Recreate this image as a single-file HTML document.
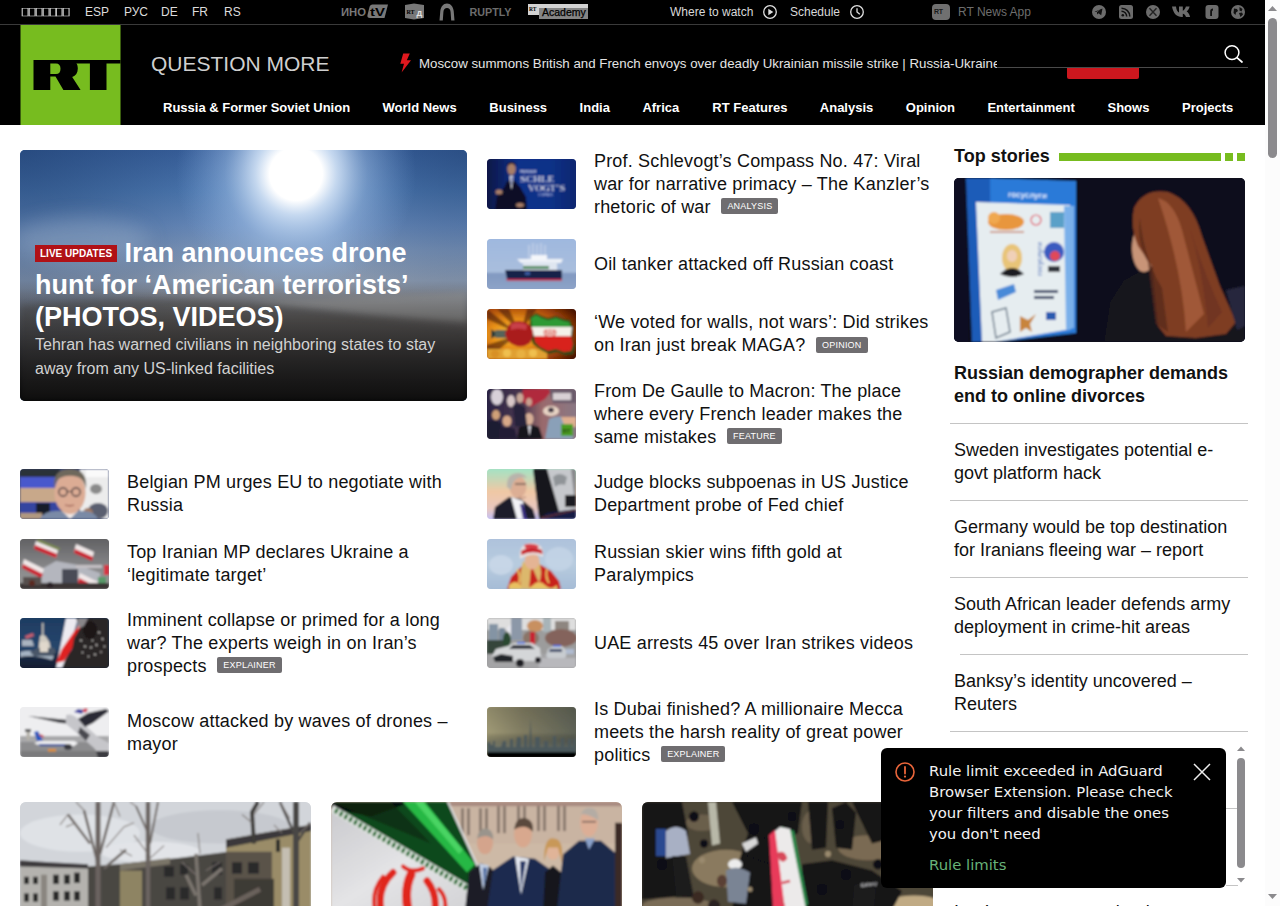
<!DOCTYPE html>
<html lang="en">
<head>
<meta charset="utf-8">
<title>RT - Breaking news, shows, podcasts</title>
<style>
*{box-sizing:border-box;margin:0;padding:0}
html,body{width:1280px;height:906px;overflow:hidden;background:#fff}
body{position:relative;font-family:"Liberation Sans",sans-serif;color:#111}
a{color:inherit;text-decoration:none}
.abs{position:absolute}
/* ---------- header ---------- */
#hdr{position:absolute;left:0;top:0;width:1265px;height:125px;background:#000}
#topline{position:absolute;left:0;top:24px;width:1265px;height:1px;background:#3a3a3a}
#langs{position:absolute;left:20px;top:0;height:24px;display:flex;align-items:center;font-size:12px;color:#d8d8d8;white-space:nowrap}
#langs span{display:block;line-height:24px}
#logo{position:absolute;left:20px;top:25px;width:101px;height:100px}
#qm{position:absolute;left:151px;top:51px;font-size:21px;line-height:26px;color:#cfcfcf;white-space:nowrap;letter-spacing:0}
#ticker{position:absolute;left:419px;top:55px;width:578px;height:18px;overflow:hidden;white-space:nowrap;font-size:13.3px;line-height:18px;color:#e4e4e4}
#nav{position:absolute;left:163px;top:99px;height:18px;font-size:13px;font-weight:bold;color:#fff;line-height:18px;white-space:nowrap}
#sline{position:absolute;left:997px;top:67px;width:251px;height:1px;background:#4a4a4a}
#sred{position:absolute;left:1067px;top:68px;width:72px;height:11px;background:#cc171e;border-radius:0 0 2px 2px}
.tsm{position:absolute;top:0;height:24px;line-height:24px;font-size:12px;white-space:nowrap}
/* ---------- content ---------- */
.row{position:absolute;display:flex;align-items:center}
.th{width:89px;height:50px;border-radius:4px;flex:none;overflow:hidden;position:relative}
.tx{font-size:18px;line-height:23px;color:#111;margin-left:18px;letter-spacing:.18px}
.tag{display:inline-block;vertical-align:middle;font-size:9px;line-height:16px;height:16px;padding:0 6px;background:#6f6d70;color:#fff;border-radius:2px;margin-left:5.500px;position:relative;top:-1.500px;letter-spacing:.2px}
#hero{position:absolute;left:20px;top:150px;width:447px;height:251px;border-radius:5px;overflow:hidden;background:#4d7fb8}
.card{position:absolute;top:802px;width:291px;height:108px;border-radius:6px 6px 0 0;overflow:hidden}
/* sidebar */
.sb{position:absolute;left:954px;width:300px;font-size:18px;line-height:23px;color:#111;white-space:nowrap;margin-top:1px}
.sep{position:absolute;left:950px;width:298px;height:1px;background:#c4c4c4}
#nav span{position:absolute;top:0}
#live{display:inline-block;vertical-align:middle;background:#b01116;color:#fff;font-size:10px;line-height:17px;height:17px;padding:0 5px;font-weight:bold;position:relative;top:-1px;letter-spacing:0;margin-right:0}
#toast{position:absolute;left:881px;top:748px;width:345px;height:140px;background:#000;border-radius:6px;font-family:"DejaVu Sans",sans-serif;overflow:hidden}
#ttxt{font-size:14.850px;line-height:21px;color:#f2f2f2;white-space:nowrap}
#tlink{font-size:14.850px;line-height:21px;color:#67b279;white-space:nowrap}
.tx{white-space:nowrap}
.card svg{height:108px!important}
</style>
</head>
<body>
<div id="hdr"></div>
<div id="topline"></div>
<!-- language bar -->
<span class="tsm" style="left:20px;top:-1.500px;color:#d0d0d0;font-size:11px;letter-spacing:-1.950px;transform:scaleX(1.7);transform-origin:0 0">&#9647;&#9647;&#9647;&#9647;&#9647;&#9647;&#9647;</span>
<span class="tsm" style="left:85px;color:#dcdcdc">ESP</span>
<span class="tsm" style="left:124px;color:#dcdcdc">РУС</span>
<span class="tsm" style="left:161px;color:#dcdcdc">DE</span>
<span class="tsm" style="left:192px;color:#dcdcdc">FR</span>
<span class="tsm" style="left:224px;color:#dcdcdc">RS</span>
<!-- partner logos -->
<svg class="abs" style="left:340px;top:2px" width="50" height="20" viewBox="0 0 50 20">
 <text x="1" y="13.800" font-family="Liberation Sans,sans-serif" font-size="10.500" font-weight="bold" fill="#787878" textLength="25" lengthAdjust="spacingAndGlyphs">ИНО</text>
 <path d="M30.500 2.500h17.500l-3.500 13.500h-14.500c-2 0-3-1.200-2.500-3l2-8c.4-1.600 1.500-2.500 3-2.500z" fill="#787878"/>
 <text x="30" y="13.500" font-family="Liberation Sans,sans-serif" font-size="11" font-weight="bold" fill="#000" textLength="15" lengthAdjust="spacingAndGlyphs">tV</text>
</svg>
<svg class="abs" style="left:404px;top:2px" width="22" height="20" viewBox="0 0 22 20">
 <path d="M1 3l9-1.500 10 1.500v13l-10 1.500-9-1.500z" fill="#787878"/>
 <text x="2.500" y="11.500" font-family="Liberation Serif,serif" font-size="6" font-weight="bold" fill="#000">RT</text>
 <text x="12.500" y="14" font-family="Liberation Sans,sans-serif" font-size="8" font-weight="bold" fill="#e4e4e4">Д</text>
</svg>
<svg class="abs" style="left:438px;top:2px" width="18" height="20" viewBox="0 0 18 20">
 <path d="M1.500 18.500l.8-9.500c.4-4 3-7.500 6.700-7.500s6.300 3.500 6.700 7.500l.8 9.500h-3.300l-.6-8.500c-.2-2.600-1.600-4-3.600-4s-3.400 1.400-3.600 4l-.6 8.500z" fill="#787878"/>
</svg>
<svg class="abs" style="left:468px;top:2px" width="46" height="20" viewBox="0 0 46 20"><text x="1.500" y="14.300" font-family="Liberation Sans,sans-serif" font-size="11" font-weight="bold" fill="#6c6c6c" textLength="42" lengthAdjust="spacingAndGlyphs">RUPTLY</text></svg>
<div class="abs" style="left:539px;top:7px;width:49px;height:11.500px;background:#858585"></div>
<div class="abs" style="left:528px;top:4px;width:60px;height:3.500px;background:#d2d2d2"></div>
<div class="abs" style="left:528px;top:4px;width:11px;height:11px;background:#d2d2d2"></div>
<span class="abs" style="left:529px;top:6px;font-size:5.500px;line-height:6px;font-weight:bold;color:#000;font-family:'Liberation Serif',serif">RT</span>
<span class="abs" style="left:542px;top:4.500px;font-size:10.500px;line-height:14px;color:#000;letter-spacing:0;-webkit-text-stroke:.25px #000">Academy</span>
<!-- where to watch -->
<span class="tsm" style="left:670px;color:#d8d8d8">Where to watch</span>
<svg class="abs" style="left:762px;top:4px" width="16" height="16" viewBox="0 0 16 16"><circle cx="8" cy="8" r="6.300" fill="none" stroke="#e0e0e0" stroke-width="1.300"/><path d="M6.300 4.800v6.400l5-3.200z" fill="#e0e0e0"/></svg>
<span class="tsm" style="left:790px;color:#d8d8d8">Schedule</span>
<svg class="abs" style="left:849px;top:4px" width="16" height="16" viewBox="0 0 16 16"><circle cx="8" cy="8" r="6.300" fill="none" stroke="#e0e0e0" stroke-width="1.300"/><path d="M8 4.200V8l2.800 2.300" fill="none" stroke="#e0e0e0" stroke-width="1.300"/></svg>
<!-- app -->
<div class="abs" style="left:932px;top:4px;width:18px;height:16px;border-radius:4px;background:#707070"></div>
<span class="abs" style="left:934px;top:8px;font-size:7px;line-height:8px;font-weight:bold;color:#1a1a1a;letter-spacing:-.2px">RT</span>
<span class="tsm" style="left:958px;color:#6e6e6e;font-size:12px">RT News App</span>
<!-- social -->
<svg class="abs" style="left:1091px;top:4px" width="16" height="16" viewBox="0 0 16 16"><circle cx="8" cy="8" r="7" fill="#6c6c6c"/><path d="M3.500 7.800l8-3.200-1.300 6.600-2.700-2-1.300 1.300-.3-2.200 3.800-3.200-4.600 2.800z" fill="#111"/></svg>
<svg class="abs" style="left:1118px;top:4px" width="16" height="16" viewBox="0 0 16 16"><rect x="1" y="1" width="14" height="14" rx="2.500" fill="#6c6c6c"/><circle cx="4.800" cy="11.200" r="1.300" fill="#111"/><path d="M3.500 7.300a5.200 5.200 0 0 1 5.200 5.200M3.500 4.200a8.300 8.300 0 0 1 8.300 8.300" fill="none" stroke="#111" stroke-width="1.500"/></svg>
<svg class="abs" style="left:1145px;top:4px" width="16" height="16" viewBox="0 0 16 16"><circle cx="8" cy="8" r="7" fill="#6c6c6c"/><path d="M4.500 4.300l7 7.400M11.500 4.300l-7 7.400" stroke="#222" stroke-width="1.400"/></svg>
<svg class="abs" style="left:1171px;top:3px" width="24" height="18" viewBox="0 0 24 18"><path d="M1 3.500h4c.3 3.600 1.900 5.600 3 6V3.500h3.800v4.200c1.200-.2 2.500-2 3.100-4.200h3.700c-.5 2.400-2 4.300-3 5 1.100.5 2.800 2 3.500 5.500h-4.100c-.6-1.700-1.700-3-3.200-3.200V14h-.9C5.800 14 2.300 10.500 1 3.500z" fill="#6c6c6c"/></svg>
<svg class="abs" style="left:1203.500px;top:4px" width="16" height="16" viewBox="0 0 16 16"><rect x="1.500" y="1" width="13" height="14" rx="3" fill="#6c6c6c"/><path d="M6.200 12V7.200c0-1.600 1-2.700 2.800-2.700v2c-.7 0-1 .3-1 .9V12z" fill="#111"/></svg>
<svg class="abs" style="left:1230px;top:4px" width="16" height="16" viewBox="0 0 16 16"><circle cx="8" cy="8" r="7" fill="#6c6c6c"/><path d="M4 4.500l3 .5 1 2-2 1.500-.5 2.500-2-2zM9.500 3l3 2-1 2.500-2-1zM9 9l3-.5 1 2-2.500 2.500z" fill="#111"/></svg>
<!-- logo -->
<div id="logo">
 <svg width="101" height="100" viewBox="-0.500 0 101 100"><rect x="0" y="0" width="100" height="100" fill="#77bc1f"/>
  <path fill-rule="evenodd" d="M13 35H50c4.800 0 7.300 3.600 7.300 8.500 0 4.300-2 7.300-5.600 8.600L60.100 65H42.900L35 51.600H29.800V65H13zM29.800 38.500V49.100H35.500c3 0 4.500-2 4.500-5.300s-1.500-5.300-4.500-5.300z" fill="#000"/>
  <path d="M48 35h52v3.500H86V65H69.400V38.500H54z" fill="#000"/>
 </svg>
</div>
<div id="qm">QUESTION MORE</div>
<svg class="abs" style="left:398px;top:52px" width="15" height="22" viewBox="0 0 15 22"><path d="M5.200 1.500h6.600L8.800 8.200h4.200L3.600 20.500 6 11.800H2.300z" fill="#e0181e"/></svg>
<div id="ticker">Moscow summons British and French envoys over deadly Ukrainian missile strike | Russia-Ukraine war: latest news and updates</div>
<div id="sline"></div>
<div id="sred"></div>
<svg class="abs" style="left:1221px;top:42px" width="24" height="24" viewBox="0 0 24 24"><circle cx="11" cy="10.600" r="6.900" fill="none" stroke="#fff" stroke-width="1.500"/><path d="M16.200 15.800l4.800 4.200" stroke="#fff" stroke-width="1.700" stroke-linecap="round"/></svg>
<div id="nav"><span style="left:0px">Russia &amp; Former Soviet Union</span><span style="left:219.5px">World News</span><span style="left:326.3px">Business</span><span style="left:416.6px">India</span><span style="left:479.4px">Africa</span><span style="left:549.3px">RT Features</span><span style="left:656.8px">Analysis</span><span style="left:742.8px">Opinion</span><span style="left:824.4px">Entertainment</span><span style="left:944.5px">Shows</span><span style="left:1019px">Projects</span></div>
<!-- fake page scrollbar -->
<div class="abs" style="left:1265px;top:0;width:15px;height:906px;background:#fcfcfc"></div>
<div class="abs" style="left:1268px;top:18px;width:9px;height:140px;border-radius:5px;background:#8b8a8d"></div>
<svg class="abs" style="left:1265px;top:0" width="15" height="906" viewBox="0 0 15 906"><path d="M3 11l4.500-5 4.500 5z" fill="#8b8a8d"/><path d="M3 894l4.500 5 4.500-5z" fill="#8b8a8d"/></svg>
<div id="hero">
<svg width="447" height="251" viewBox="0 0 447 251" style="display:block;position:absolute;left:0;top:0" ><defs>
<linearGradient id="hs" x1="0" y1="0" x2="0" y2="1"><stop offset="0" stop-color="#3a629e"/><stop offset=".16" stop-color="#4e7ab2"/><stop offset=".3" stop-color="#6a8cbc"/><stop offset=".4" stop-color="#7e96b8"/><stop offset=".52" stop-color="#8a98ac"/><stop offset=".58" stop-color="#7c8088"/><stop offset=".68" stop-color="#5c5a5a"/><stop offset=".8" stop-color="#3a383a"/><stop offset=".92" stop-color="#1c1c1e"/><stop offset="1" stop-color="#0a0a0a"/></linearGradient>
<radialGradient id="hsun" cx="276" cy="24" r="120" gradientUnits="userSpaceOnUse"><stop offset="0" stop-color="#fff"/><stop offset=".22" stop-color="#fff"/><stop offset=".34" stop-color="#cfe0f4" stop-opacity=".9"/><stop offset=".6" stop-color="#9cbce4" stop-opacity=".5"/><stop offset="1" stop-color="#7ea6da" stop-opacity="0"/></radialGradient>
<linearGradient id="hdk" x1="0" y1="0" x2="0" y2="1"><stop offset="0" stop-color="#000" stop-opacity="0"/><stop offset=".55" stop-color="#000" stop-opacity="0"/><stop offset=".75" stop-color="#000" stop-opacity=".25"/><stop offset="1" stop-color="#000" stop-opacity=".6"/></linearGradient>
<radialGradient id="hl" cx="0" cy="0" r="230" gradientUnits="userSpaceOnUse"><stop offset="0" stop-color="#1c3c6c" stop-opacity=".6"/><stop offset="1" stop-color="#1c3c6c" stop-opacity="0"/></radialGradient><radialGradient id="hr" cx="447" cy="0" r="170" gradientUnits="userSpaceOnUse"><stop offset="0" stop-color="#1c3c6c" stop-opacity=".5"/><stop offset="1" stop-color="#1c3c6c" stop-opacity="0"/></radialGradient>
<filter id="hblur" x="-30%" y="-60%" width="160%" height="220%"><feGaussianBlur stdDeviation="10"/></filter>
<filter id="hblur2" x="-10%" y="-30%" width="120%" height="160%"><feGaussianBlur stdDeviation="3"/></filter>
<linearGradient id="hbeam" x1="0" y1="0" x2="0" y2="1"><stop offset="0" stop-color="#a8c6ee" stop-opacity=".7"/><stop offset="1" stop-color="#a8c6ee" stop-opacity="0"/></linearGradient>
</defs>
<rect width="447" height="251" fill="url(#hs)"/>
<rect width="447" height="251" fill="url(#hl)"/><rect width="447" height="251" fill="url(#hr)"/>
<rect x="236" y="-20" width="84" height="150" fill="url(#hbeam)" filter="url(#hblur)"/>
<ellipse cx="60" cy="90" rx="70" ry="22" fill="#9ab0cc" opacity=".45" filter="url(#hblur)"/>
<rect width="447" height="160" fill="url(#hsun)"/>
<path d="M230 152l217-10v30l-100-8z" fill="#9a9a98" opacity=".5" filter="url(#hblur2)"/>
<path d="M0 156q120-14 260 0l187 24v71H0z" fill="#4a4644" opacity=".45" filter="url(#hblur2)"/>
<rect width="447" height="251" fill="url(#hdk)"/></svg>
 <div class="abs" id="herotxt" style="left:15px;top:87px;width:420px">
  <div style="font-size:27px;line-height:32px;font-weight:bold;color:#fff;white-space:nowrap"><span id="live">LIVE UPDATES</span> Iran announces drone<br>hunt for ‘American terrorists’<br>(PHOTOS, VIDEOS)</div>
  <div style="font-size:16px;line-height:24px;color:#d2d2d2;margin-top:0;white-space:nowrap">Tehran has warned civilians in neighboring states to stay<br>away from any US-linked facilities</div>
 </div>
</div>
<div class="row" style="left:487px;top:144px;height:80px"><div class="th" id="t1"><svg width="89" height="51" viewBox="0 0 89 51" style="display:block;position:absolute;left:0;top:0" ><defs><linearGradient id="g1" x1="0" x2="1"><stop offset="0" stop-color="#0a1746"/><stop offset=".35" stop-color="#10308a"/><stop offset=".7" stop-color="#103288"/><stop offset="1" stop-color="#0c2670"/></linearGradient></defs><filter id="bl1" x="-5%" y="-5%" width="110%" height="110%"><feGaussianBlur stdDeviation="0.8"/></filter><rect width="89" height="51" fill="url(#g1)"/><g filter="url(#bl1)">
<rect width="89" height="51" fill="url(#g1)"/>
<path d="M8 51l2-14 7-8 3-7 8 0 5 6 6 10 1 13z" fill="#0a0d26"/>
<ellipse cx="24.500" cy="10" rx="4.200" ry="6" fill="#a87e68"/><path d="M20.500 7q4-5 8 0v-2q-4-4-8 0z" fill="#1a1210"/>
<path d="M22.500 17l2 14 2-14z" fill="#e8e8f0"/><path d="M24 18l.5 9 1-9z" fill="#1c2c80"/>
<ellipse cx="12" cy="33" rx="3.500" ry="2.500" fill="#a87e68"/><ellipse cx="33" cy="46" rx="4" ry="2" fill="#a87e68"/>
<text x="33" y="22.500" font-family="Liberation Serif,serif" font-size="8.500" fill="#f0f0f6" textLength="34" lengthAdjust="spacingAndGlyphs">SCHLE</text>
<text x="41" y="31.500" font-family="Liberation Serif,serif" font-size="8.500" fill="#f0f0f6" textLength="37" lengthAdjust="spacingAndGlyphs">VOGT’S</text>
<text x="33" y="13.500" font-family="Liberation Sans,sans-serif" font-size="2.600" font-weight="bold" fill="#e0e0f0">PROFESSOR</text>
<text x="51" y="37" font-family="Liberation Sans,sans-serif" font-size="3" fill="#d0d4f0">COMPASS</text></g></svg></div><!--/t1--><div class="tx">Prof. Schlevogt’s Compass No. 47: Viral<br>war for narrative primacy – The Kanzler’s<br>rhetoric of war <span class="tag">ANALYSIS</span></div></div>
<div class="row" style="left:487px;top:224px;height:80px"><div class="th" id="t2"><svg width="89" height="50" viewBox="0 0 89 50" style="display:block;position:absolute;left:0;top:0" ><defs><linearGradient id="g2" x1="0" y1="0" x2="0" y2="1"><stop offset="0" stop-color="#9fb8df"/><stop offset=".65" stop-color="#a9bedd"/><stop offset=".7" stop-color="#8299c0"/><stop offset="1" stop-color="#8da3c8"/></linearGradient></defs><filter id="bl2" x="-5%" y="-5%" width="110%" height="110%"><feGaussianBlur stdDeviation="0.8"/></filter><rect width="89" height="50" fill="url(#g2)"/><g filter="url(#bl2)">
<rect width="89" height="50" fill="url(#g2)"/>
<path d="M42 6v14M46 4v16M50 5v15M54 4v16M58 6v14" stroke="#c8d4ea" stroke-width="1.200"/>
<path d="M30 20h46l-2 4H34z" fill="#eef2f8"/><rect x="36" y="23" width="34" height="8" fill="#dfe6f0"/><rect x="44" y="16" width="16" height="5" fill="#f4f6fa"/>
<path d="M36 27h26v3H36z" fill="#4a8a58"/>
<path d="M18 31h57v9H20z" fill="#18224a"/><path d="M19 40h56v1.800H20z" fill="#c42a44"/>
<rect x="38" y="33" width="5" height="3" fill="#3a5aa0"/></g></svg></div><!--/t2--><div class="tx">Oil tanker attacked off Russian coast</div></div>
<div class="row" style="left:487px;top:294px;height:80px"><div class="th" id="t3"><svg width="89" height="50" viewBox="0 0 89 50" style="display:block;position:absolute;left:0;top:0" ><defs><radialGradient id="g3" cx=".32" cy=".5" r=".8"><stop offset="0" stop-color="#f8d040"/><stop offset=".35" stop-color="#e89018"/><stop offset=".7" stop-color="#a84808"/><stop offset="1" stop-color="#4a1404"/></radialGradient></defs><filter id="bl3" x="-5%" y="-5%" width="110%" height="110%"><feGaussianBlur stdDeviation="0.8"/></filter><rect width="89" height="50" fill="url(#g3)"/><g filter="url(#bl3)">
<rect width="89" height="50" fill="url(#g3)"/>
<path d="M0 0L30 24 0 10zM0 50L30 26 0 36zM10 0l22 22L22 0zM40 0l-6 22L50 0z" fill="#3a1206" opacity=".55"/>
<rect x="0" y="40" width="60" height="10" fill="#e0a030"/><circle cx="20" cy="44" r="4" fill="#f0c050"/><circle cx="34" cy="45" r="4.500" fill="#e8b040"/><circle cx="46" cy="44" r="4" fill="#f0c050"/><circle cx="8" cy="45" r="4" fill="#d89028"/>
<path d="M43 8l6-4 6 3 6 2 8-2 8 3 6 1 3 8-1 10 3 8-2 8-8 1-8-3-8 2-8-4-8-6-4-10z" fill="#2a4a18"/>
<path d="M44 9l5-3 6 3 6 2 8-2 8 3 5 1 2 5H45z" fill="#2f9a34"/>
<path d="M44 18h41l-1 9H47z" fill="#f4f0e8"/>
<path d="M47 27h37l2 8-2 7-7 1-8-3-8 2-8-4-5-5z" fill="#d8241a"/>
<path d="M63 20v6M60.500 20.500q-2 3 1 5.500M65.500 20.500q2 3-1 5.500M58.500 21q-3 3 1 6M67.500 21q3 3-1 6" stroke="#d8241a" stroke-width="1.100" fill="none"/>
<path d="M4 23l6-2h28l8 4-8 4H10l-6-2z" fill="#56645a"/><path d="M4 20l4 3v4l-4 3z" fill="#2e3a34"/>
<path d="M20 20q2-8 12-8 12 1 14 10 1 6-3 12-8 6-16 2-6-2-8-8-2-4 1-8z" fill="#aa1a1c"/>
<path d="M24 15q8-3 16 1l-1 5q-8-3-15 0z" fill="#c84048"/></g></svg></div><!--/t3--><div class="tx">‘We voted for walls, not wars’: Did strikes<br>on Iran just break MAGA? <span class="tag">OPINION</span></div></div>
<div class="row" style="left:487px;top:374px;height:80px"><div class="th" id="t4"><svg width="89" height="50" viewBox="0 0 89 50" style="display:block;position:absolute;left:0;top:0" ><defs><linearGradient id="g4" x1="0" x2="1"><stop offset="0" stop-color="#2a2244"/><stop offset=".4" stop-color="#4a3850"/><stop offset=".62" stop-color="#9a6a6c"/><stop offset="1" stop-color="#8a7884"/></linearGradient></defs><filter id="bl4" x="-5%" y="-5%" width="110%" height="110%"><feGaussianBlur stdDeviation="0.8"/></filter><rect width="89" height="50" fill="url(#g4)"/><g filter="url(#bl4)">
<rect width="89" height="50" fill="url(#g4)"/>
<path d="M36 0h30l-8 10-14 8-10-6z" fill="#b02a3e"/>
<path d="M62 0h27v14H66z" fill="#6a5a6a"/><rect x="66" y="4" width="18" height="7" fill="#d8d0d4"/>
<ellipse cx="64" cy="22" rx="8" ry="5" fill="#e8d4c4"/><ellipse cx="64" cy="21" rx="3" ry="2.500" fill="#3a3040"/>
<path d="M62 30q10-6 24 2v18H58z" fill="#8aa0b8"/><path d="M74 28h15v10H78z" fill="#e0b090"/>
<ellipse cx="10" cy="8" rx="6" ry="8" fill="#d8d0d8"/><ellipse cx="24" cy="12" rx="4" ry="6" fill="#d8c8c8"/><ellipse cx="33" cy="9" rx="3.500" ry="5" fill="#c8a898"/>
<ellipse cx="9" cy="26" rx="4" ry="5" fill="#d0a078"/><ellipse cx="20" cy="32" rx="4.500" ry="5.500" fill="#d8a888"/><ellipse cx="42" cy="30" rx="4.500" ry="6" fill="#d8b098"/><ellipse cx="42" cy="13" rx="3" ry="4" fill="#c8a090"/>
<path d="M0 32q8-2 14 2l2 16H0z" fill="#1e1a30"/><path d="M12 40q8-4 16 0l2 10H12z" fill="#241e34"/><path d="M32 38q10-4 20 0l4 12H30z" fill="#16141e"/><path d="M26 16q6-2 12 2l2 18-12 2z" fill="#28243a"/>
<path d="M41 37l1.500 10 1.500-10z" fill="#e8e8f0"/>
<rect x="74" y="35" width="12" height="12" fill="#4c9c22"/><text x="75.500" y="43.500" font-family="Liberation Sans,sans-serif" font-size="6" font-weight="bold" fill="#1e3a12">RT</text></g></svg></div><!--/t4--><div class="tx">From De Gaulle to Macron: The place<br>where every French leader makes the<br>same mistakes <span class="tag">FEATURE</span></div></div>
<div class="row" style="left:487px;top:454px;height:80px"><div class="th" id="t5"><svg width="89" height="50" viewBox="0 0 89 50" style="display:block;position:absolute;left:0;top:0" ><defs><linearGradient id="g5" x1="0" y1="0" x2="0" y2="1"><stop offset="0" stop-color="#a4e2c4"/><stop offset=".45" stop-color="#f0c8a4"/><stop offset=".8" stop-color="#e8c8c0"/><stop offset="1" stop-color="#c4c0f4"/></linearGradient></defs><filter id="bl5" x="-5%" y="-5%" width="110%" height="110%"><feGaussianBlur stdDeviation="0.8"/></filter><rect width="89" height="50" fill="url(#g5)"/><g filter="url(#bl5)">
<rect width="89" height="50" fill="url(#g5)"/>
<path d="M46 0h43v50H52z" fill="#c6c8cc"/><path d="M46 0h14l12 42-14 8h-6z" fill="#17171b"/>
<path d="M66 8q6-6 14 0l-2 8q-6-2-10 2z" fill="#909498"/><path d="M84 0h5v26h-2z" fill="#88888c"/>
<rect x="78" y="26" width="11" height="12" fill="#1c1c24"/><path d="M52 50l8-6 29-4v10z" fill="#141a44"/><path d="M54 49l34-8" stroke="#7a3a20" stroke-width="1"/>
<path d="M6 50l2-12 14-10 12 2 12 10 3 10z" fill="#1e1f2a"/>
<path d="M24 28l6 22h8l-2-18z" fill="#f2f2f6"/><path d="M33 35l3 15h4l-4-15z" fill="#3a2f84"/>
<ellipse cx="31" cy="18" rx="8.500" ry="11" fill="#dcae94"/><path d="M20 18q-1-14 12-14 6 1 8 5-8-2-12 2-3 3-4 10z" fill="#b8b4ac"/>
<path d="M28 15h11" stroke="#3a3030" stroke-width="1"/><path d="M32 28q4 2 7 0" stroke="#a06a5a" stroke-width=".8" fill="none"/></g></svg></div><!--/t5--><div class="tx">Judge blocks subpoenas in US Justice<br>Department probe of Fed chief</div></div>
<div class="row" style="left:487px;top:524px;height:80px"><div class="th" id="t6"><svg width="89" height="50" viewBox="0 0 89 50" style="display:block;position:absolute;left:0;top:0" ><defs><linearGradient id="g6" x1="0" y1="0" x2="0" y2="1"><stop offset="0" stop-color="#aec2dc"/><stop offset=".5" stop-color="#b8ccdf"/><stop offset="1" stop-color="#a6bcd6"/></linearGradient></defs><filter id="bl6" x="-5%" y="-5%" width="110%" height="110%"><feGaussianBlur stdDeviation="0.8"/></filter><rect width="89" height="50" fill="url(#g6)"/><g filter="url(#bl6)">
<rect width="89" height="50" fill="url(#g6)"/>
<ellipse cx="14" cy="26" rx="12" ry="10" fill="#cad8e8" opacity=".8"/><ellipse cx="72" cy="20" rx="14" ry="12" fill="#c4d4e6" opacity=".8"/>
<path d="M20 50l4-12 10-10 8-4 12 2 10 6 8 10 2 8z" fill="#c8201f"/>
<path d="M22 46q6-6 12 0t12 0 12 0 12 0v4H22z" fill="#e8c060"/><path d="M30 30q4 6 2 14M60 30q-2 8 2 14" stroke="#e8c060" stroke-width="2" fill="none"/>
<path d="M36 22q-4 14-2 28h8l2-20zM52 22q4 12 0 22l-6-14z" fill="#dcb86c"/>
<ellipse cx="45" cy="22" rx="7.500" ry="8.500" fill="#e4b494"/>
<path d="M33 20q-2-16 12-16 12 0 11 14-10-6-23 2z" fill="#e8e0e0"/><path d="M34 12q10-6 21-1l.5 4q-11-4-21 1z" fill="#c8242c"/><path d="M37 6q8-3 15 1l-2 3q-6-2-11 0z" fill="#d84048"/></g></svg></div><!--/t6--><div class="tx">Russian skier wins fifth gold at<br>Paralympics</div></div>
<div class="row" style="left:487px;top:603px;height:80px"><div class="th" id="t7"><svg width="89" height="50" viewBox="0 0 89 50" style="display:block;position:absolute;left:0;top:0" ><filter id="bl7" x="-5%" y="-5%" width="110%" height="110%"><feGaussianBlur stdDeviation="0.8"/></filter><rect width="89" height="50" fill="#9c9c9c"/><g filter="url(#bl7)"><rect width="89" height="50" fill="#9c9c9c"/>
<rect width="89" height="12" fill="#dedede"/>
<rect x="2" y="6" width="9" height="18" fill="#8494a4"/><rect x="12" y="10" width="6" height="14" fill="#78889a"/><rect x="24" y="0" width="11" height="22" fill="#8c98a8"/><rect x="68" y="3" width="14" height="10" fill="#8e8680"/><rect x="56" y="0" width="8" height="14" fill="#a8b4b8"/>
<ellipse cx="48" cy="8" rx="8" ry="6" fill="#c89060"/><ellipse cx="74" cy="20" rx="16" ry="9" fill="#84645c"/><ellipse cx="44" cy="20" rx="8" ry="7" fill="#8a7468"/>
<path d="M20 10l4-4v22h-4z" fill="#e8e8ee"/><rect x="43" y="14" width="5" height="14" fill="#c82030"/>
<path d="M0 22h22v14H0z" fill="#34443a"/><ellipse cx="20" cy="22" rx="4" ry="8" fill="#2a4a30"/>
<rect x="0" y="36" width="89" height="14" fill="#a4a4a6"/><rect x="52" y="40" width="37" height="10" fill="#b8b8bc"/>
<path d="M5 38l4-7 12-3 6-3h18l8 5 1 10-4 3H8z" fill="#d4d6d8"/><path d="M26 27h17l5 4H22z" fill="#30363c"/><path d="M6 39l8-3 12 2v6H8z" fill="#24282c"/><circle cx="33" cy="45" r="4" fill="#1c1c20"/><circle cx="51" cy="42" r="3" fill="#1c1c20"/>
<rect x="30" y="24" width="8" height="1.500" fill="#3060e0"/>
<path d="M59 38l2-7 6-3h8l4 4v7l-2 1H61z" fill="#c8ccd0"/><path d="M63 31h12v3H62z" fill="#3a4a6a"/><rect x="66" y="27" width="8" height="1.500" fill="#3060e0"/>
<rect x="79" y="31" width="8" height="5" fill="#b0bcd0"/></g></svg></div><!--/t7--><div class="tx">UAE arrests 45 over Iran strikes videos</div></div>
<div class="row" style="left:487px;top:692px;height:80px"><div class="th" id="t8"><svg width="89" height="51" viewBox="0 0 89 51" style="display:block;position:absolute;left:0;top:0" ><defs><linearGradient id="g8" x1="0" y1="0" x2="1" y2="0"><stop offset="0" stop-color="#a09a76"/><stop offset=".4" stop-color="#807c62"/><stop offset="1" stop-color="#5e6256"/></linearGradient><linearGradient id="g8b" x1="0" y1="0" x2="0" y2="1"><stop offset="0" stop-color="#000" stop-opacity=".12"/><stop offset=".5" stop-color="#000" stop-opacity="0"/><stop offset=".85" stop-color="#6a7678" stop-opacity=".7"/><stop offset="1" stop-color="#6a7678" stop-opacity=".8"/></linearGradient></defs><filter id="bl8" x="-5%" y="-5%" width="110%" height="110%"><feGaussianBlur stdDeviation="0.8"/></filter><rect width="89" height="51" fill="url(#g8)"/><g filter="url(#bl8)">
<rect width="89" height="51" fill="url(#g8)"/><rect width="89" height="51" fill="url(#g8b)"/>
<path d="M0 36l2-2 2 4h2v-4h2v6h6l2-6h3v6h4v-8h3v8h3l1-10h4v10h3v-12h3v12h2l1.500-28 1.500 28h3v-10h5v10h4v-6h4v6h5v-11h3v11h5v-9h3v9h4v-8h3v8h2v-8h3v14H0z" fill="#4c585c"/>
<rect y="45" width="89" height="6" fill="#060606"/></g></svg></div><!--/t8--><div class="tx">Is Dubai finished? A millionaire Mecca<br>meets the harsh reality of great power<br>politics <span class="tag">EXPLAINER</span></div></div>
<div class="row" style="left:20px;top:454px;height:80px"><div class="th" id="u1"><svg width="89" height="50" viewBox="0 0 89 50" style="display:block;position:absolute;left:0;top:0" ><filter id="bl9" x="-5%" y="-5%" width="110%" height="110%"><feGaussianBlur stdDeviation="0.8"/></filter><rect width="89" height="50" fill="#3c4870"/><g filter="url(#bl9)"><rect width="89" height="50" fill="#3c4870"/>
<rect width="40" height="8" fill="#2c3038"/><rect y="8" width="40" height="11" fill="#4a58cc"/><rect y="19" width="40" height="14" fill="#c8a88a"/><rect y="33" width="40" height="17" fill="#3444a0"/><rect x="16" y="34" width="14" height="12" fill="#181c2c"/><rect x="0" y="44" width="22" height="6" fill="#b09880"/>
<rect x="60" width="29" height="50" fill="#ececec"/><ellipse cx="76" cy="20" rx="6" ry="5" fill="#8a8a8a"/><ellipse cx="78" cy="42" rx="10" ry="8" fill="#5a5e70"/><ellipse cx="68" cy="44" rx="5" ry="5" fill="#a07860"/><rect x="66" y="0" width="23" height="8" fill="#fafafa"/>
<path d="M20 50q4-8 16-8h28q10 0 14 8z" fill="#7a8aa6"/><path d="M42 42l8 8 8-8z" fill="#f0e8e4"/>
<ellipse cx="50" cy="24" rx="15.500" ry="21" fill="#dcac94"/>
<path d="M34 20q-2-20 16-20 18 0 16 20-2-10-8-12-10-3-18 1-5 3-6 11z" fill="#6e685c"/>
<circle cx="43" cy="23" r="4.200" fill="none" stroke="#2c2830" stroke-width="1.200"/><circle cx="56" cy="23" r="4.200" fill="none" stroke="#2c2830" stroke-width="1.200"/><path d="M47 22.500h5" stroke="#2c2830" stroke-width="1"/>
<path d="M45 36q5 1.500 9 0" stroke="#9a5a50" stroke-width="1.300" fill="none"/></g></svg></div><!--/u1--><div class="tx">Belgian PM urges EU to negotiate with<br>Russia</div></div>
<div class="row" style="left:20px;top:524px;height:80px"><div class="th" id="u2"><svg width="89" height="50" viewBox="0 0 89 50" style="display:block;position:absolute;left:0;top:0" ><defs><linearGradient id="gu2" x1="0" y1="0" x2="0" y2="1"><stop offset="0" stop-color="#626264"/><stop offset=".6" stop-color="#8a8a8c"/><stop offset="1" stop-color="#9a9a98"/></linearGradient></defs><filter id="bl10" x="-5%" y="-5%" width="110%" height="110%"><feGaussianBlur stdDeviation="0.8"/></filter><rect width="89" height="50" fill="url(#gu2)"/><g filter="url(#bl10)">
<rect width="89" height="50" fill="url(#gu2)"/>
<path d="M22 30l14-8 22 4 22 8v10H22z" fill="#b4b6be"/><rect x="42" y="30" width="16" height="16" fill="#4a4c56"/><rect x="56" y="26" width="26" height="3" fill="#c4c0c4"/>
<g><path d="M16 2l22 9-2 8L14 9z" fill="#f0e8e8"/><path d="M15 6l22 9-1 4L14 10z" fill="#cc2430"/><path d="M18 0l22 9-.7 2.500L17 2.500z" fill="#7a8a50"/></g>
<g><path d="M56 5l18 8-2 8-18-8z" fill="#f0e8e8"/><path d="M55 10l18 8-1 4-18-8z" fill="#cc2430"/></g>
<g><path d="M4 20l20 10-3 8L2 28z" fill="#f0e8e8"/><path d="M3 25l20 10-2 4L2 29z" fill="#cc2430"/></g>
<g><path d="M60 34l18 9-2 7-18-9z" fill="#f0e8e8"/><path d="M59 39l18 9-1 2H70l-12-6z" fill="#cc2430"/></g>
<path d="M84 26h5v10h-5z" fill="#d83040"/><rect x="78" y="38" width="8" height="6" fill="#5a9a6a"/>
<rect x="0" y="44" width="89" height="6" fill="#3a3434"/><rect x="3" y="38" width="18" height="8" fill="#56504e"/><circle cx="12" cy="44" r="3" fill="#5a2a24"/><circle cx="30" cy="46" r="3" fill="#2a2426"/></g></svg></div><!--/u2--><div class="tx">Top Iranian MP declares Ukraine a<br>‘legitimate target’</div></div>
<div class="row" style="left:20px;top:603px;height:80px"><div class="th" id="u3"><svg width="89" height="50" viewBox="0 0 89 50" style="display:block;position:absolute;left:0;top:0" ><defs><linearGradient id="gu3" x1="0" y1="0" x2="0" y2="1"><stop offset="0" stop-color="#1e3c62"/><stop offset=".6" stop-color="#27466c"/><stop offset=".75" stop-color="#1a2a44"/><stop offset="1" stop-color="#121c30"/></linearGradient></defs><filter id="bl11" x="-5%" y="-5%" width="110%" height="110%"><feGaussianBlur stdDeviation="0.8"/></filter><rect width="89" height="50" fill="url(#gu3)"/><g filter="url(#bl11)">
<rect width="89" height="50" fill="url(#gu3)"/>
<path d="M0 34q14-4 34 4l-2 4q-18-6-32-3z" fill="#c8d4e0" opacity=".8"/>
<path d="M2 22h10l2 6h-12z" fill="#aab4c0"/><path d="M5 18l8-3 1 3-8 3z" fill="#c86070"/>
<path d="M18 34l2-16 2-1v-12h1.500v12l2 1 4 6 2 10z" fill="#cfcac0"/><path d="M10 34l8-4h16l2 4-4 4H14z" fill="#4a5668"/><rect x="20" y="24" width="8" height="10" fill="#e0d8cc"/>
<path d="M46 0h12l-14 50H36z" fill="#eceaf0"/><path d="M60 5l6 4-22 34-8 2 6-14z" fill="#e02420"/>
<path d="M56 0h33v50H42l4-10 6-8 2-12 6-10z" fill="#2a2628"/><ellipse cx="70" cy="12" rx="7" ry="9" fill="#1a1618"/>
<path d="M60 22l2 1M64 28l2 1M70 30l2-1M76 26l1 2M80 34l2 0M74 36l2 1M68 38l1 1M82 20l1 2M84 28l1 1M62 34l1 1M78 14l2 1M72 22l1 1" stroke="#d8d4d0" stroke-width="1.200"/>
<path d="M58 0h10l-4 8-8 4z" fill="#c8c4c8" opacity=".6"/></g></svg></div><!--/u3--><div class="tx">Imminent collapse or primed for a long<br>war? The experts weigh in on Iran’s<br>prospects <span class="tag">EXPLAINER</span></div></div>
<div class="row" style="left:20px;top:693px;height:80px"><div class="th" id="u4" style="top:-1px"><svg width="89" height="51" viewBox="0 0 89 51" style="display:block;position:absolute;left:0;top:0" ><filter id="bl12" x="-5%" y="-5%" width="110%" height="110%"><feGaussianBlur stdDeviation="0.8"/></filter><rect width="89" height="51" fill="#eeeef0"/><g filter="url(#bl12)"><rect width="89" height="51" fill="#eeeef0"/>
<rect y="29" width="89" height="22" fill="#8c8c8e"/><rect y="29" width="89" height="6" fill="#a8a8aa"/><rect y="44" width="89" height="7" fill="#7a7a7c"/>
<rect x="5" y="22" width="6" height="3" fill="#5a5a5c"/><rect x="6.500" y="25" width="3.500" height="8" fill="#b4b0a8"/>
<path d="M14 36l6-2h34l4 2-4 3H20z" fill="#f0f0f2"/><path d="M14 25l4-1 5 10h-6z" fill="#2858c0"/><path d="M17 27l6 1 1 3z" fill="#d03040"/><path d="M18 37h30v2H20z" fill="#3050a0"/><ellipse cx="48" cy="40" rx="4" ry="3" fill="#3a3a40"/>
<path d="M8 9l40 4 6 4-14-1z" fill="#38383e"/>
<path d="M46 8q6-2 12 4l20 18 11 6v15H82l-8-10-16-14-12-10z" fill="#c6c6ca"/><path d="M58 12l10-6 18-4 3 2-16 12-8 4z" fill="#2c2c34"/><path d="M54 5l4-3 6 1-2 4z" fill="#4040a0"/><path d="M62 3l4-2 2 2-3 3z" fill="#d03050"/>
<path d="M60 20l10 8-4 6-8-8z" fill="#4a4a50"/><path d="M76 44h13v7H78z" fill="#3a3a40"/>
<rect x="28" y="42" width="8" height="2.500" fill="#e09030"/></g></svg></div><!--/u4--><div class="tx">Moscow attacked by waves of drones –<br>mayor</div></div>
<div class="abs" style="left:954px;top:144px;font-size:18px;line-height:24px;font-weight:bold;color:#111">Top stories</div>
<div class="abs" style="left:1059px;top:153px;width:162px;height:8px;background:#77bc1f"></div>
<div class="abs" style="left:1225px;top:153px;width:8px;height:8px;background:#77bc1f"></div>
<div class="abs" style="left:1237px;top:153px;width:8px;height:8px;background:#77bc1f"></div>
<div class="abs" id="simg" style="left:954px;top:178px;width:291px;height:164px;border-radius:5px;overflow:hidden;background:#0b0c1c"><svg width="291" height="164" viewBox="0 0 291 164" style="display:block;position:absolute;left:0;top:0" ><filter id="bl13" x="-5%" y="-5%" width="110%" height="110%"><feGaussianBlur stdDeviation="1.1"/></filter><rect width="291" height="164" fill="#0a0b1c"/><g filter="url(#bl13)"><rect width="291" height="164" fill="#0a0b1c"/>
<path d="M0 0h14v164H0z" fill="#0c1024"/>
<path d="M12 0h30v164H18z" fill="#1c5cb8"/>
<path d="M36 0l86 3v152l-80 9H38z" fill="#2a7ad8"/>
<path d="M22 24l94 3 1 124-76 13H28z" fill="#e6edf0"/><path d="M110 28l10 0v122l-8 2z" fill="#7ab0ea"/>
<text x="54" y="19" font-family="Liberation Sans,sans-serif" font-size="8" font-weight="bold" fill="#e8f0ff" transform="rotate(2 54 19)">госуслуги</text>
<text x="88" y="98" font-family="Liberation Sans,sans-serif" font-size="7" font-weight="bold" fill="#7a94c8" transform="rotate(-90 88 98)">госуслуги</text>
<ellipse cx="52" cy="44" rx="18" ry="8" fill="#e8963c"/><circle cx="40" cy="40" r="6" fill="#f0a850"/><rect x="36" y="53" width="34" height="2" fill="#d0a090"/>
<rect x="96" y="34" width="14" height="16" fill="#5aa0c8"/><circle cx="82" cy="42" r="5" fill="none" stroke="#e05060" stroke-width="1.200"/>
<ellipse cx="58" cy="80" rx="10" ry="14" fill="#e8c478"/><ellipse cx="58" cy="78" rx="5" ry="6" fill="#f0d0b8"/><path d="M46 96q12-12 24 0-12 6-24 0z" fill="#1a1a20"/>
<circle cx="100" cy="74" r="10" fill="#3a5ac0"/><circle cx="101" cy="78" r="5" fill="#e04858"/><rect x="94" y="88" width="12" height="6" fill="#30343c"/>
<path d="M42 112l18-6 2 8-18 8z" fill="#4a8ad8"/><path d="M80 112h24v3H80zM80 118h20v3H80z" fill="#3a4a6a"/>
<path d="M38 134l14-4 4 24-14 6z" fill="none" stroke="#6a7a8a" stroke-width="1.500"/><path d="M66 138l8 4 8-6-6 10 2 8-6-4-6 4z" fill="#c8843c"/><rect x="92" y="134" width="10" height="8" fill="#2a5ab0"/>
<path d="M150 164l6-40 14-22 26-14 30 6 60 40 5 4v26z" fill="#13131b"/>
<ellipse cx="190" cy="70" rx="12" ry="24" fill="#c89478"/>
<path d="M180 30q10-20 34-16 24 8 34 44l18 50 16 36-10 12-30 4-30-2-8-10-6-60-14-20q-8-18-4-38z" fill="#7e3c24"/>
<path d="M204 20q16 4 24 32l22 84-18 18q-4-64-28-134z" fill="#a45c3a" opacity=".9"/><path d="M186 40q4 40 22 70l6 44-12-8-8-62q-12-20-8-44z" fill="#5a2a1a" opacity=".8"/><path d="M236 50q12 40 32 84l-14 16q-4-50-18-100z" fill="#6e3420" opacity=".8"/>
<path d="M272 112l19-4v40l-8 4z" fill="#26283e"/></g></svg></div><!--/simg-->
<div class="sb" style="top:361px;font-weight:bold">Russian demographer demands<br>end to online divorces</div>
<div class="sep" style="top:423px"></div>
<div class="sb" style="top:438px">Sweden investigates potential e-<br>govt platform hack</div>
<div class="sep" style="top:500px"></div>
<div class="sb" style="top:515px">Germany would be top destination<br>for Iranians fleeing war – report</div>
<div class="sep" style="top:577px"></div>
<div class="sb" style="top:592px">South African leader defends army<br>deployment in crime-hit areas</div>
<div class="sep" style="top:654px;left:960px;width:288px"></div>
<div class="sb" style="top:669px">Banksy’s identity uncovered –<br>Reuters</div>
<div class="sep" style="top:731px"></div>
<div class="sep" style="top:808px;left:1226px;width:12px"></div>
<div class="sep" style="top:885px;left:1226px;width:12px"></div>
<div class="sb" style="top:900px">Iran’s new supreme leader vows<br>revenge</div>
<div class="card" id="c1" style="left:20px"><svg width="291" height="104" viewBox="0 0 291 104" style="display:block;position:absolute;left:0;top:0" preserveAspectRatio="none"><filter id="bl14" x="-5%" y="-5%" width="110%" height="110%"><feGaussianBlur stdDeviation="1.0"/></filter><rect width="291" height="104" fill="#d2d5da"/><g filter="url(#bl14)"><rect width="291" height="104" fill="#d2d5da"/>
<ellipse cx="60" cy="30" rx="60" ry="18" fill="#dfe2e6"/><ellipse cx="200" cy="24" rx="70" ry="16" fill="#c6c9cf"/><ellipse cx="130" cy="48" rx="50" ry="10" fill="#e2e4e8"/>
<path d="M0 58l40 2 28 0v44H0z" fill="#b4b2ae"/><path d="M0 56l30 2 38 2v4l-68-2z" fill="#3c3a3c"/>
<path d="M68 62l30-2 60-6 50-6v56H68z" fill="#4a4642"/><path d="M100 60l50-6v6l-50 6z" fill="#7a7468"/>
<path d="M100 66h22v38H100z" fill="#8e8464"/>
<path d="M206 36l60-10 25-4v82h-85z" fill="#9a8c68"/><path d="M206 36l60-10 25-4v6l-85 16z" fill="#3a383a"/><path d="M206 48h46v56h-46z" fill="#5a5248"/><rect x="262" y="44" width="8" height="60" fill="#c4beb2"/><rect x="214" y="74" width="40" height="30" fill="#3e3a36"/>
<g fill="#2c2a2c"><rect x="4" y="72" width="5" height="7"/><rect x="13" y="72" width="5" height="7"/><rect x="33" y="70" width="6" height="9"/><rect x="44" y="70" width="6" height="9"/><rect x="54" y="68" width="6" height="10"/><rect x="4" y="88" width="5" height="8"/><rect x="13" y="88" width="5" height="8"/><rect x="33" y="86" width="6" height="9"/><rect x="44" y="86" width="6" height="9"/><rect x="54" y="86" width="6" height="9"/><rect x="144" y="62" width="10" height="10"/><rect x="160" y="60" width="8" height="10"/><rect x="146" y="82" width="9" height="12"/><rect x="160" y="82" width="9" height="12"/><rect x="192" y="58" width="10" height="12"/><rect x="212" y="58" width="10" height="11"/><rect x="228" y="58" width="11" height="11"/><rect x="194" y="82" width="8" height="12"/><rect x="256" y="36" width="4" height="12"/><rect x="274" y="34" width="4" height="10"/></g>
<g stroke="#6a6460" fill="none"><path d="M78 104V0" stroke-width="5"/><path d="M78 60L64 8M80 50l14-50M70 40L48 12M84 64l22-18" stroke-width="2.500"/><path d="M128 104V0" stroke-width="4.500"/><path d="M128 30L116 4M130 40l8-40" stroke-width="2"/><path d="M24 104V70" stroke-width="6" stroke="#8a8680"/><path d="M276 104V0" stroke-width="6" stroke="#4a4644"/><path d="M276 40l14-20M274 30L260 0" stroke-width="2.500" stroke="#4a4644"/><path d="M234 40l-2-30 6-10" stroke-width="4" stroke="#3c3a38"/><path d="M180 104l-4-54M182 80l20-16M176 90l-10-20" stroke-width="3.500" stroke="#7a746e"/><path d="M200 104l40-20" stroke-width="5" stroke="#6a625c"/></g>
<g stroke="#7c7672" stroke-width="1.200" fill="none" opacity=".85"><path d="M64 8l-8-8M70 40l-16-20M56 20l-10 4M94 0l6 14M86 44l18-20M104 24l10-4M116 4l-6-4M138 0l-4 20M128 50l-14-18M128 56l16-14M180 50l-2-20M176 70l-14-12M186 66l14-8M48 12l-8 10M100 46l12 6M260 0l10 16M290 20l-10 10M262 30l-8-8M234 12l10-12M232 20l-10-8"/></g></g></svg></div><!--/c1-->
<div class="card" id="c2" style="left:331px"><svg width="291" height="104" viewBox="0 0 291 104" style="display:block;position:absolute;left:0;top:0" preserveAspectRatio="none"><defs><linearGradient id="gc2" x1="0" y1="0" x2="1" y2="1"><stop offset="0" stop-color="#c8c8cc"/><stop offset=".5" stop-color="#e4e4e6"/><stop offset="1" stop-color="#cfcfd2"/></linearGradient></defs><filter id="bl15" x="-5%" y="-5%" width="110%" height="110%"><feGaussianBlur stdDeviation="1.0"/></filter><rect width="291" height="104" fill="#cdb9a6"/><g filter="url(#bl15)">
<rect width="291" height="104" fill="#cdb9a6"/>
<rect x="110" y="0" width="181" height="40" fill="#c9b4a2"/><g fill="#8a7a70"><rect x="130" y="6" width="3" height="26"/><rect x="136" y="6" width="3" height="26"/><rect x="148" y="6" width="3" height="26"/><rect x="154" y="6" width="3" height="26"/><rect x="166" y="4" width="3" height="26"/><rect x="172" y="4" width="3" height="26"/><rect x="186" y="4" width="3" height="26"/><rect x="192" y="4" width="3" height="26"/><rect x="206" y="2" width="3" height="26"/><rect x="212" y="2" width="3" height="26"/><rect x="226" y="2" width="3" height="26"/><rect x="232" y="2" width="3" height="26"/></g>
<rect x="110" y="0" width="181" height="4" fill="#a88a80"/><rect x="112" y="0" width="6" height="40" fill="#5a5450"/>
<path d="M0 0H118L168 104H0z" fill="url(#gc2)"/>
<path d="M0 0H116L156 84 150 90 6 8 0 5z" fill="#0d4a1c"/>
<path d="M0 0H80L40 14 0 6z" fill="#060c08"/><path d="M0 0H60L100 40 30 12z" fill="#0a2a12" opacity=".8"/>
<path d="M72 0h22l50 60-8 8z" fill="#27b844"/><path d="M84 0h8l40 46-4 4z" fill="#5ae070" opacity=".7"/>
<path d="M2 3l152 86-3 6L0 10z" fill="#dfe3df"/><path d="M4 8l146 83" stroke="#1a6a2a" stroke-width="5" stroke-dasharray="3 2.500"/>
<g fill="none" stroke="#e0281c" stroke-linecap="round"><path d="M80 70q-7 14-3 34" stroke-width="9"/><path d="M62 68q-16 14-12 36" stroke-width="7"/><path d="M52 72q-12 14-8 32" stroke-width="4"/><path d="M96 76q10 12 8 28" stroke-width="7"/><path d="M108 84q8 8 6 20" stroke-width="4"/><path d="M72 62q8 7 20 2" stroke-width="4"/></g>
<g transform="translate(0,-8) scale(1 1.08)"><ellipse cx="154" cy="44" rx="8" ry="10" fill="#d4a48c"/><path d="M146 40q2-10 10-9 7 2 6 10-6-6-16-1z" fill="#9a948c"/>
<path d="M134 104l4-34 12-8 10 4 8 10v28z" fill="#1c1e28"/><path d="M148 62l4 24 6-22z" fill="#c4d0e4"/><path d="M152 66l1 18 3-18z" fill="#4a6aa0"/>
<ellipse cx="192" cy="36" rx="9" ry="12" fill="#d8a88e"/><path d="M183 32q2-12 12-10 8 2 7 12-8-8-19-2z" fill="#5a4a3c"/>
<path d="M156 104l6-36 20-12 22 2 16 10 4 36z" fill="#1e2c50"/><path d="M184 56l6 34 8-32z" fill="#e4e8f0"/><path d="M189 60l1 26 5-26z" fill="#2a3a68"/>
<ellipse cx="222" cy="50" rx="7" ry="9" fill="#e0b498"/><path d="M213 60q0-22 10-20 10 0 8 22l-4-14-10 0z" fill="#c89858"/><path d="M212 104l2-34 8-6 8 6 4 34z" fill="#16161e"/>
<ellipse cx="258" cy="26" rx="9" ry="12" fill="#dcae96"/><path d="M250 18q4-8 14-4 4 4 3 10-8-6-17-6z" fill="#b4aca4"/><path d="M251 25h14" stroke="#4a4040" stroke-width="1"/>
<path d="M226 104l6-50 16-12 22 0 16 12 5 50z" fill="#1c2a4c"/><path d="M254 40l4 10 6-10z" fill="#8aa0c8"/>
</g>
<rect x="284" y="20" width="7" height="84" fill="#3a2c28"/></g></svg></div><!--/c2-->
<div class="card" id="c3" style="left:642px"><svg width="291" height="104" viewBox="0 0 291 104" style="display:block;position:absolute;left:0;top:0" preserveAspectRatio="none"><filter id="bl16" x="-5%" y="-5%" width="110%" height="110%"><feGaussianBlur stdDeviation="1.2"/></filter><rect width="291" height="104" fill="#4e4638"/><g filter="url(#bl16)"><rect width="291" height="104" fill="#4e4638"/>
<ellipse cx="84" cy="64" rx="34" ry="18" fill="#8a7a5e"/><ellipse cx="226" cy="44" rx="30" ry="12" fill="#7a6a52"/><ellipse cx="272" cy="100" rx="30" ry="10" fill="#c0aa84"/><ellipse cx="36" cy="100" rx="36" ry="8" fill="#7a6c56"/><ellipse cx="170" cy="24" rx="10" ry="16" fill="#6a5e4c"/><ellipse cx="60" cy="20" rx="16" ry="8" fill="#6a5e4c"/>
<g fill="#121216"><path d="M0 0h40l6 30-10 40 10 20-46 4z"/><path d="M90 0h70l-4 30-20 10-10 40-30-20 10-30z"/><path d="M166 0h20l-2 44-14 2z"/><path d="M190 6l14-6 10 10-4 36-16-2z"/><path d="M210 0h50l-14 36-16 4z"/><path d="M100 50l30 10 10 44H90z"/><path d="M160 60l30-4 40 10 30 20-10 18h-90z"/><path d="M120 34l24 8-6 20-22-6z"/></g>
<path d="M24 28q10-8 20 0l4 22-24 4z" fill="#a8b0c4"/><rect x="14" y="26" width="10" height="26" fill="#2a4a90"/><path d="M30 52h14l8 40H34z" fill="#1a1a1e"/>
<ellipse cx="93" cy="60" rx="7" ry="5" fill="#ececec"/><path d="M84 66q10-6 24 2l-4 30-18-2z" fill="#7a8494"/><ellipse cx="80" cy="76" rx="5" ry="6" fill="#5a4034"/>
<path d="M66 0l8 0 4 40-8 2z" fill="#b8b8a8"/><path d="M100 40l14-6 2 6-12 8z" fill="#d8d8d8"/>
<path d="M130 34l10-10 12 4 14 70-4 6h-26z" fill="#2a8a4c"/><path d="M128 32l10-8 10 2 16 78h-30z" fill="#eceaea"/><path d="M127 32l6-5 10 77h-12z" fill="#e83a5a"/>
<path d="M136 50q6-3 8 4-4 6-8-4zM140 78l8-2M138 92l4 8" stroke="#d8485a" stroke-width="2.500" fill="#d8485a"/>
<path d="M212 80q14-6 22 4l-2 20h-22z" fill="#1a1a1e"/><text x="219" y="82" font-family="Liberation Sans,sans-serif" font-size="5" font-weight="bold" fill="#d0d0d0" transform="rotate(-8 219 82)">Galaxy</text>
<g fill="#0e0e12"><circle cx="52" cy="14" r="5"/><circle cx="20" cy="60" r="5"/><circle cx="112" cy="26" r="5"/><circle cx="150" cy="14" r="4"/><circle cx="198" cy="22" r="4"/><circle cx="236" cy="60" r="5"/><circle cx="204" cy="70" r="5"/><circle cx="180" cy="84" r="5"/><circle cx="250" cy="30" r="4"/><circle cx="62" cy="40" r="4"/></g><g fill="#9a8a6e"><circle cx="60" cy="56" r="3"/><circle cx="108" cy="84" r="2.500"/><circle cx="186" cy="50" r="3"/><circle cx="246" cy="48" r="2.500"/></g><ellipse cx="56" cy="92" rx="6" ry="6" fill="#3a2a22"/><ellipse cx="72" cy="100" rx="6" ry="6" fill="#2a2020"/></g></svg></div><!--/c3-->
<!-- inner scrollbar -->
<div class="abs" style="left:1237px;top:758px;width:8px;height:110px;border-radius:4px;background:#8b8a8d"></div>
<svg class="abs" style="left:1235px;top:742px" width="12" height="146" viewBox="0 0 12 146"><path d="M2 9l4-4.500 4 4.500z" fill="#8b8a8d"/><path d="M2 136l4 4.500 4-4.500z" fill="#8b8a8d"/></svg>
<!-- adguard toast -->
<div id="toast">
 <svg class="abs" style="left:13px;top:13px" width="22" height="22" viewBox="0 0 22 22"><circle cx="11" cy="11" r="9" fill="none" stroke="#e9653a" stroke-width="1.600"/><path d="M11 6v6.500" stroke="#e9653a" stroke-width="1.800" stroke-linecap="round"/><circle cx="11" cy="15.600" r="1.100" fill="#e9653a"/></svg>
 <div class="abs" id="ttxt" style="left:48px;top:12.500px;width:260px">Rule limit exceeded in AdGuard<br>Browser Extension. Please check<br>your filters and disable the ones<br>you don't need</div>
 <div class="abs" id="tlink" style="left:48px;top:107px">Rule limits</div>
 <svg class="abs" style="left:311px;top:13.500px" width="20" height="20" viewBox="0 0 20 20"><path d="M2 2l16 16M18 2L2 18" stroke="#eee" stroke-width="1.500"/></svg>
</div>
</body>
</html>
